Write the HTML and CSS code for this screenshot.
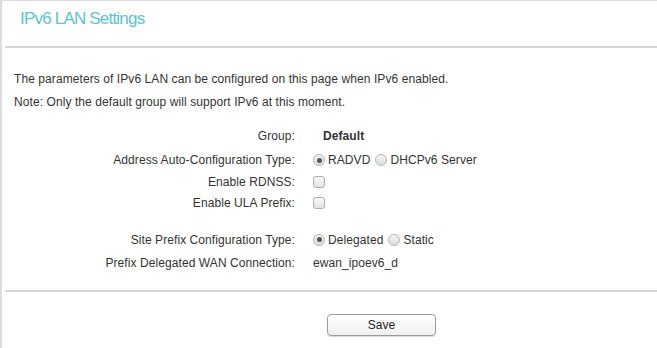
FILE: index.html
```html
<!DOCTYPE html>
<html>
<head>
<meta charset="utf-8">
<link rel="stylesheet" href="styles.css">
</head>
<body>
<div class="panel">
  <div class="header"><h1 class="title">IPv6 LAN Settings</h1></div>
  <div class="sep"></div>
  <div class="intro">
    <p>The parameters of IPv6 LAN can be configured on this page when IPv6 enabled.</p>
    <p>Note: Only the default group will support IPv6 at this moment.</p>
  </div>
  <div class="form">
    <div class="row r24"><span class="label">Group:</span><span class="value bold indent">Default</span></div>
    <div class="row r24"><span class="label">Address Auto-Configuration Type:</span>
      <span class="value"><span class="radio on"></span>RADVD<span class="radio"></span>DHCPv6 Server</span></div>
    <div class="row r20"><span class="label">Enable RDNSS:</span><span class="value"><span class="check"></span></span></div>
    <div class="row r21"><span class="label">Enable ULA Prefix:</span><span class="value"><span class="check"></span></span></div>
    <div class="row r23 gap"><span class="label">Site Prefix Configuration Type:</span>
      <span class="value"><span class="radio on"></span>Delegated<span class="radio"></span>Static</span></div>
    <div class="row r23"><span class="label">Prefix Delegated WAN Connection:</span><span class="value">ewan_ipoev6_d</span></div>
  </div>
  <div class="sep bottom"></div>
  <div class="actions"><button class="btn">Save</button></div>
</div>
</body>
</html>
```
FILE: styles.css
```css
html, body { margin: 0; padding: 0; background: #fff; }
body { font-family: "Liberation Sans", Arial, sans-serif; font-size: 12px; color: #333; letter-spacing: 0.08px; }
.panel {
  width: 655px; height: 347px;
  border-top: 1px solid #dcdcdc;
  border-left: 2px solid #dcdcdc;
  overflow: hidden;
}
.header { height: 45px; padding-left: 18px; }
.title {
  margin: 0; font-weight: normal; font-size: 17px; line-height: 20px;
  padding-top: 8px; color: #5cc3d3; letter-spacing: -0.8px;
}
.sep { height: 2px; background: #d6d6d6; margin-left: 3px; }
.intro { padding: 20px 0 0 12px; }
.intro p { margin: 0; line-height: 23px; }
.form { margin-top: 10px; }
.row { display: flex; align-items: center; }
.r24 { height: 24px; }
.r23 { height: 23px; }
.r21 { height: 21px; }
.r20 { height: 20px; }
.gap { margin-top: 15px; }
.label { width: 293px; text-align: right; flex: none; }
.value { margin-left: 18px; display: flex; align-items: center; }
.indent { padding-left: 10px; }
.bold { font-weight: bold; }
.radio {
  width: 12px; height: 12px; border-radius: 50%;
  border: 1px solid #b5b5b5; background: linear-gradient(#f6f6f6, #dadada);
  box-sizing: border-box; margin: 0 3px 0 0; position: relative; flex: none;
}
.value .radio:not(:first-child) { margin-left: 5px; }
.radio.on::after {
  content: ""; position: absolute; left: 2.5px; top: 2.5px; width: 5px; height: 5px;
  border-radius: 50%; background: #555;
}
.check {
  width: 12px; height: 12px; border: 1px solid #b0b0b0; border-radius: 3px;
  background: linear-gradient(#fafafa, #e2e2e2); box-sizing: border-box;
}
.bottom { margin-top: 16px; }
.actions { padding-top: 22px; padding-left: 325px; }
.btn {
  width: 109px; height: 22px; border: 1px solid #9a9a9a; border-radius: 4px;
  background: linear-gradient(#ffffff, #f0f0f0); font-family: "Liberation Sans", Arial, sans-serif;
  font-size: 12px; color: #222; padding: 0; box-shadow: 0 1px 1px rgba(0,0,0,0.15);
}
```
